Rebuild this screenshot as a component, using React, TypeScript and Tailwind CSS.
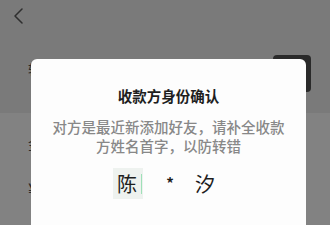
const font = { fontFamily: '"Noto Sans CJK SC", "Noto Sans", sans-serif' }

export default function App() {
  return (
    <div className="relative w-[330px] h-[225px] overflow-hidden bg-[#828282]" style={font}>
      {/* page behind the dimmed layer */}
      <div className="h-[113px] bg-[#7a7a7a] pt-[8px] pl-[13px]">
        <svg width="11" height="16" viewBox="0 0 11 16" fill="none">
          <path d="M9 1 L2 8 L9 15" stroke="#2e2e2e" strokeWidth="1.5" strokeLinecap="round" strokeLinejoin="round" />
        </svg>
        <div className="mt-[31px] flex items-start justify-between pl-[15px] pr-[19px]">
          <span className="mt-[7px] text-[13px] text-[#2a2a2a] leading-none">转账</span>
          <div className="w-[38px] h-[37px] rounded-[4px] bg-[#2a2a2a]" />
        </div>
      </div>
      <div className="pl-[28px] pt-[24px] flex flex-col text-[13px] text-[#2a2a2a] leading-none">
        <span>金额</span>
        <span className="mt-[29px] text-[18px]">¥</span>
      </div>

      {/* dialog */}
      <div className="absolute left-[31px] top-[59px] w-[275px] h-[200px] rounded-t-[6px] bg-[#fdfdfd] pt-[27px]">
        <div className="text-center text-[14.5px] leading-[20px] font-bold text-[#1f1f1f]">
          收款方身份确认
        </div>
        <div className="mt-[11px] text-center text-[14.5px] leading-[19px] font-medium text-[#888888]">
          对方是最近新添加好友，请补全收款
          <br />
          方姓名首字，以防转错
        </div>
        <div className="mt-[13px] flex items-center pl-[82px] text-[#1e1e1e]">
          <div className="relative w-[30px] h-[31px] bg-[#eef2ef] flex items-center justify-center text-[20px] leading-none">
            <span className="-ml-[2px]">陈</span>
            <span className="absolute right-[1px] top-[6px] w-px h-[20px] bg-[#9fe0b8]" />
          </div>
          <span className="ml-[19px] w-[16px] text-center text-[15px] font-bold leading-none -mt-[3px]">*</span>
          <span className="ml-[16px] w-[22px] text-center text-[20px] leading-none">汐</span>
        </div>
      </div>
    </div>
  )
}
